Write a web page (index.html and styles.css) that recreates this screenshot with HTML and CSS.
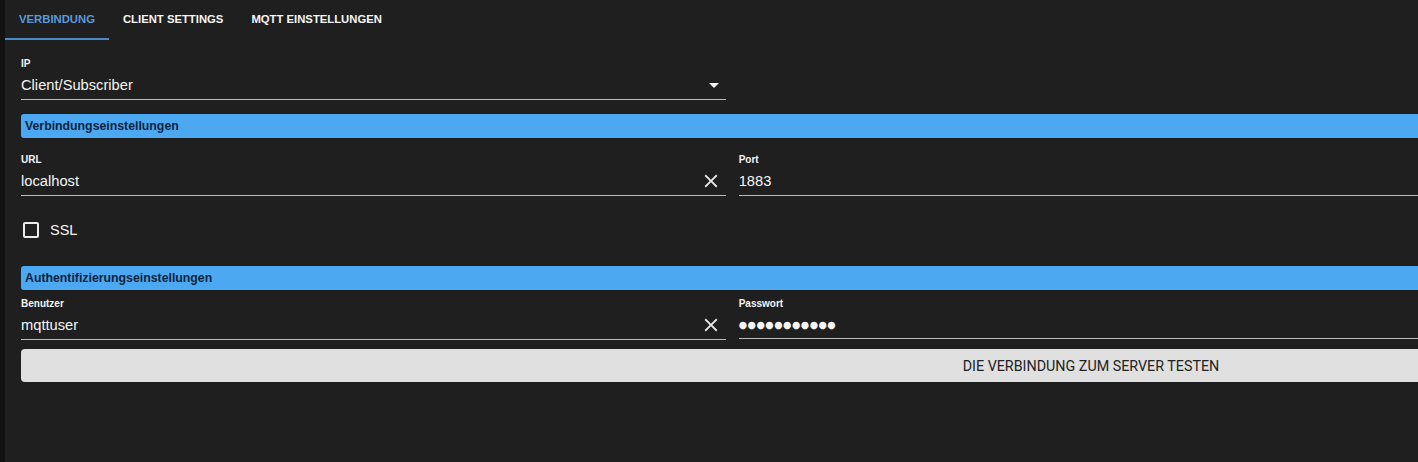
FILE: index.html
```html
<!DOCTYPE html>
<html lang="de">
<head>
    <meta charset="UTF-8">
    <meta name="viewport" content="width=device-width, initial-scale=1.0">
    <title>MQTT Verbindung</title>
    <link rel="stylesheet" href="styles.css">
</head>
<body>
    <div class="page">
        <div class="tabs">
            <div class="tab active">Verbindung</div>
            <div class="tab">Client settings</div>
            <div class="tab">MQTT Einstellungen</div>
        </div>

        <div class="form">
            <div class="grid">
                <div class="field">
                    <div class="label">IP</div>
                    <div class="value">
                        <span class="text">Client/Subscriber</span>
                        <svg class="arrow" width="24" height="24" viewBox="0 0 24 24"><path d="M7 10l5 5 5-5z"/></svg>
                    </div>
                </div>
            </div>

            <div class="section first">Verbindungseinstellungen</div>

            <div class="grid">
                <div class="field">
                    <div class="label">URL</div>
                    <div class="value">
                        <span class="text">localhost</span>
                        <svg class="clear" width="22" height="22" viewBox="0 0 24 24"><path d="M19 6.41L17.59 5 12 10.59 6.41 5 5 6.41 10.59 12 5 17.59 6.41 19 12 13.41 17.59 19 19 17.59 13.41 12z"/></svg>
                    </div>
                </div>
                <div class="field">
                    <div class="label">Port</div>
                    <div class="value"><span class="text">1883</span></div>
                </div>
            </div>

            <label class="check">
                <span class="box"></span>
                <span>SSL</span>
            </label>

            <div class="section">Authentifizierungseinstellungen</div>

            <div class="grid">
                <div class="field">
                    <div class="label">Benutzer</div>
                    <div class="value">
                        <span class="text">mqttuser</span>
                        <svg class="clear" width="22" height="22" viewBox="0 0 24 24"><path d="M19 6.41L17.59 5 12 10.59 6.41 5 5 6.41 10.59 12 5 17.59 6.41 19 12 13.41 17.59 19 19 17.59 13.41 12z"/></svg>
                    </div>
                </div>
                <div class="field short">
                    <div class="label">Passwort</div>
                    <div class="value"><span class="text dots">●●●●●●●●●●●</span></div>
                </div>
            </div>

            <button class="test">Die Verbindung zum Server testen</button>
        </div>
    </div>
</body>
</html>
```

FILE: styles.css
```css
html, body {
    margin: 0;
    padding: 0;
    height: 100%;
    overflow: hidden;
}

body {
    background-color: #121212;
    font-family: "Liberation Sans", Arial, sans-serif;
    color: #f5f5f5;
}

.page {
    margin-left: 5px;
    height: 100%;
    background-color: #1f1f1f;
}

.tabs {
    display: flex;
    height: 40px;
}

.tab {
    padding: 0 14px;
    height: 38px;
    line-height: 38px;
    font-size: 11.3px;
    font-weight: bold;
    text-transform: uppercase;
    color: #f5f5f5;
    border-bottom: 2px solid transparent;
}

.tab.active {
    color: #5a9ad8;
    border-bottom-color: #4a87c6;
}

.form {
    width: 2140px;
    padding-left: 16px;
    padding-top: 18px;
}

.grid {
    display: grid;
    grid-template-columns: repeat(3, 1fr);
    column-gap: 13px;
}

.label {
    font-size: 10px;
    font-weight: bold;
    line-height: 12px;
    color: #f5f5f5;
}

.value {
    display: flex;
    align-items: center;
    justify-content: space-between;
    height: 29px;
    border-bottom: 1px solid #bcbcbc;
}

.field.short .value {
    height: 28px;
}

.text {
    font-size: 14.7px;
    color: #f5f5f5;
}

.dots {
    font-family: "DejaVu Sans", sans-serif;
    font-size: 9.6px;
    letter-spacing: 0.5px;
}

.arrow {
    fill: #f2f2f2;
}

.clear {
    fill: #e8e8e8;
    margin-right: 4px;
}

.section {
    margin-top: 15px;
    margin-bottom: 8px;
    height: 24px;
    line-height: 24px;
    padding-left: 4px;
    background-color: #4ba8f1;
    border-radius: 3px 0 0 3px;
    color: #0c2440;
    font-size: 12.3px;
    font-weight: bold;
}

.section.first {
    margin-top: 14px;
    margin-bottom: 16px;
}

.check {
    display: flex;
    align-items: center;
    gap: 11px;
    height: 42px;
    margin-top: 13px;
    padding-left: 2px;
    font-size: 14.5px;
}

.box {
    width: 12px;
    height: 12px;
    border: 2px solid #ececec;
    border-radius: 2px;
}

.test {
    display: block;
    width: 100%;
    height: 33px;
    margin-top: 9px;
    border: none;
    border-radius: 4px;
    background-color: #e0e0e0;
    color: #222;
    font-family: Roboto, sans-serif;
    font-size: 14.3px;
    text-transform: uppercase;
}
```
